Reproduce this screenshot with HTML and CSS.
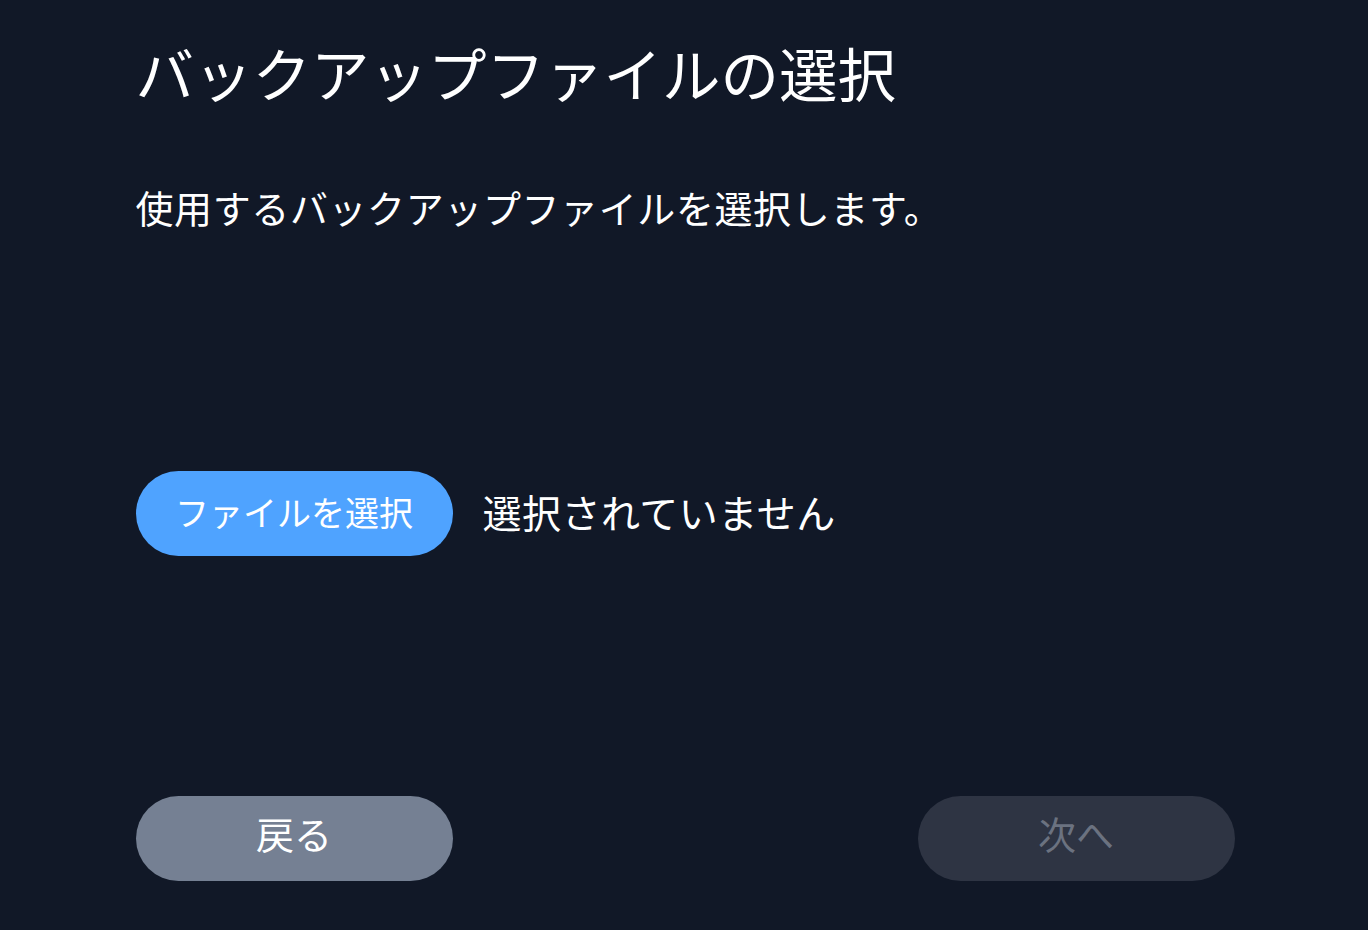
FILE: index.html
```html
<!DOCTYPE html>
<html lang="ja">
<head>
<meta charset="utf-8">
<link rel="stylesheet" href="styles.css">
</head>
<body>
<main class="page">
  <h1 class="title">バックアップファイルの選択</h1>
  <p class="lead">使用するバックアップファイルを選択します。</p>
  <div class="picker">
    <button class="btn btn-primary">ファイルを選択</button>
    <span class="status">選択されていません</span>
  </div>
  <div class="nav">
    <button class="btn btn-back">戻る</button>
    <button class="btn btn-next" disabled>次へ</button>
  </div>
</main>
</body>
</html>
```
FILE: styles.css
```css
html, body {
  margin: 0;
  padding: 0;
  background: #111827;
}
body {
  font-family: "Noto Sans CJK JP", "Noto Sans", sans-serif;
  color: #ffffff;
  height: 930px;
  overflow: hidden;
}
.page {
  width: 1099px;
  margin: 0 auto;
  padding-top: 35px;
  padding-left: 2px;
  display: flex;
  flex-direction: column;
}
.title {
  margin: 0;
  font-size: 58.5px;
  font-weight: 400;
  line-height: 74px;
  letter-spacing: 0;
}
.lead {
  margin: 0;
  margin-top: 70px;
  font-size: 38px;
  line-height: 56px;
  letter-spacing: 0.6px;
}
.picker {
  margin-top: 236px;
  display: flex;
  align-items: center;
  gap: 30px;
}
.btn {
  width: 317px;
  height: 85px;
  border: none;
  border-radius: 43px;
  font-family: inherit;
  font-size: 34px;
  color: #ffffff;
  padding: 0 0 5px;
}
.btn-primary {
  background: #4fa3ff;
}
.status {
  font-size: 39px;
  letter-spacing: 0.5px;
  padding-bottom: 6px;
}
.nav {
  margin-top: 240px;
  display: flex;
  justify-content: space-between;
}
.btn-back {
  background: #758093;
  font-size: 38px;
  padding-bottom: 12px;
}
.btn-next {
  background: #2e3443;
  color: #6b7280;
  font-size: 38px;
  padding-bottom: 12px;
}
```
